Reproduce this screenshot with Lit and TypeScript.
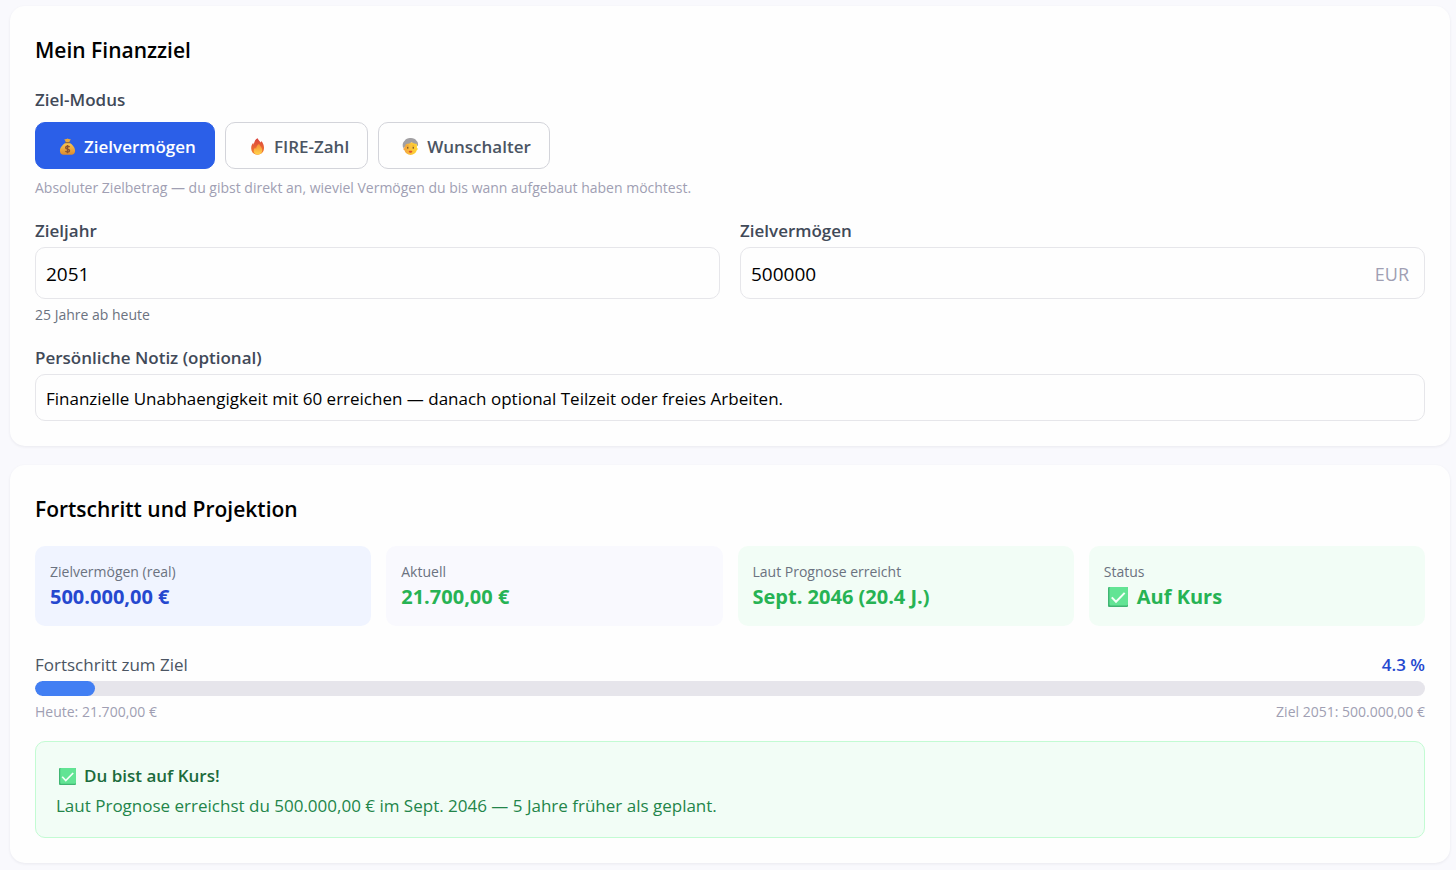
import { LitElement, html, css } from "lit";
import { customElement, state } from "lit/decorators.js";
import { classMap } from "lit/directives/class-map.js";
import { styleMap } from "lit/directives/style-map.js";

const moneyBag = html`<svg class="icon" viewBox="0 0 18 18" aria-hidden="true">
  <defs>
    <linearGradient id="bag" x1="0" y1="0" x2="0" y2="1">
      <stop offset="0" stop-color="#f9c650" />
      <stop offset="1" stop-color="#dd8b2d" />
    </linearGradient>
  </defs>
  <path d="M5.6 1.2c1 .5 1.500-.6 2.400-.1 .7-.8 1.500-.8 2.100 0 .8-.5 1.400.6 2.400.1L10.700 4.600H7.400z" fill="#e9a93c" />
  <path d="M7 5.400h4.200c3 1.500 5.800 4.800 5.800 8.100 0 2.700-1.600 4.200-3.700 4.200H4.800c-2.200 0-3.800-1.500-3.800-4.200C1 10.200 4 6.900 7 5.400z" fill="url(#bag)" />
  <rect x="6.300" y="4.200" width="5.500" height="1.400" rx=".7" fill="#8a6a4a" />
  <path d="M11.200 9.700c-.4-.7-1.200-1-2.200-1-1.200 0-2 .6-2 1.500 0 2.200 4.200 1 4.200 3.200 0 .9-.9 1.500-2.100 1.500-1.100 0-1.900-.4-2.300-1.100M9 7.400v8.800" fill="none" stroke="#8a5230" stroke-width="1.400" />
</svg>`;

const flame = html`<svg class="icon" viewBox="0 0 18 18" aria-hidden="true">
  <defs>
    <linearGradient id="outer" x1="0" y1="0" x2="0" y2="1">
      <stop offset="0" stop-color="#d9403b" />
      <stop offset="1" stop-color="#f5832f" />
    </linearGradient>
    <linearGradient id="inner" x1="0" y1="0" x2="0" y2="1">
      <stop offset="0" stop-color="#f58a35" />
      <stop offset="1" stop-color="#ffd54a" />
    </linearGradient>
  </defs>
  <path d="M9.200.3c.6 2 2.200 2.800 3.200 4.400.4-.4.600-.9.600-1.500 1.900 1.900 2.900 4.700 2.900 7.500 0 4-2.700 7-6.700 7s-6.900-2.800-6.900-6.900c0-2.700 1-4.400 2.300-5.700 0 .9.100 1.500.5 2C5.300 4.200 6.500 1.500 9.200.3z" fill="url(#outer)" />
  <path d="M10.800 6c.1 2 3.200 3.500 3.200 7 0 2.800-1.900 4.600-4.500 4.600-2.500 0-4.500-1.600-4.500-4.100 0-1.500.7-2.700 1.600-3.500.1.800.4 1.300 1 1.500C7.600 9 8.700 7.200 10.800 6z" fill="url(#inner)" />
</svg>`;

const elder = html`<svg class="icon" viewBox="0 0 18 18" aria-hidden="true">
  <defs>
    <linearGradient id="skin" x1="0" y1="0" x2="1" y2="0">
      <stop offset="0" stop-color="#f2a040" />
      <stop offset=".5" stop-color="#fbc23a" />
      <stop offset="1" stop-color="#ffd52e" />
    </linearGradient>
  </defs>
  <path d="M2.400 4.500h13.400v6.300h.9c.1 1-.3 1.900-1.100 2.200-.8 3-3.200 4.900-6.500 4.900s-5.700-1.900-6.500-4.900c-.9-.3-1.300-1.200-1.200-2.200h1z" fill="url(#skin)" />
  <path d="M1.200 10.600C.3 7.700.5 4.600 2.800 2.800 4 .9 6.200 0 8.800.1c2.900-.2 5.400.8 6.500 2.700 1.700 1.200 2 3.600 1.500 6-.8-.6-1.100-1.500-1.300-2.600-2.300-.1-4-.8-5.300-2C8.900 5.500 6.800 6.200 4.700 6.300c-.5.400-.8.700-1 1.200-.3 1.400-.9 2.600-2.500 3.100z" fill="#a2a0a3" />
  <path d="M5 8.600h1.900M11 8.600h1.900" fill="none" stroke="#c88a35" stroke-width=".7" />
  <ellipse cx="6.100" cy="10.400" rx=".8" ry=".9" fill="#704828" />
  <ellipse cx="11.900" cy="10.400" rx=".8" ry=".9" fill="#704828" />
  <path d="M7 14c1.200-.5 2.800-.5 4 0-.4 1.200-1.100 1.700-2 1.700s-1.600-.5-2-1.700z" fill="#dc5330" />
</svg>`;

const check = html`<svg class="icon check" viewBox="0 0 18 18" aria-hidden="true">
  <rect width="18" height="18" rx="1" fill="#41b573" />
  <rect x="1.300" y="0" width="16.700" height="16.600" rx="1" fill="#62e494" />
  <path d="M3.400 9.300l3.800 4L15 5.300" fill="none" stroke="#f4fff8" stroke-width="1.800" />
</svg>`;

const MODES = [
  { id: "wealth", label: "Zielvermögen", icon: moneyBag },
  { id: "fire", label: "FIRE-Zahl", icon: flame },
  { id: "age", label: "Wunschalter", icon: elder },
];

const STATS = [
  { label: "Zielvermögen (real)", value: "500.000,00 €", tone: "blue" },
  { label: "Aktuell", value: "21.700,00 €", tone: "neutral" },
  { label: "Laut Prognose erreicht", value: "Sept. 2046 (20.4 J.)", tone: "green" },
  { label: "Status", value: "Auf Kurs", tone: "green", checked: true },
];

@customElement("app-root")
export class AppRoot extends LitElement {
  @state() private mode = "wealth";
  private progress = 4.3;

  static styles = css`
    :host {
      display: block;
      box-sizing: border-box;
      min-height: 100vh;
      padding: 6px 6px 7px 10px;
      background: #f9f9fd;
      font-family: "Open Sans", "Noto Sans", sans-serif;
      font-size: 17px;
      line-height: 24px;
      color: #000;
    }
    *, *::before, *::after { box-sizing: border-box; }
    h2, h3, p, dl, dd, dt { margin: 0; }
    main { display: flex; flex-direction: column; gap: 19px; }
    .card {
      display: flex;
      flex-direction: column;
      padding: 25px;
      border-radius: 15px;
      background: #fefefe;
      box-shadow: 0 1px 3px rgba(30, 30, 50, 0.07);
    }
    h2 { font-size: 21px; line-height: 38px; font-weight: 600; margin-bottom: 18px; }
    .label { display: block; font-weight: 600; color: #414958; line-height: 26px; }
    .modes { display: flex; flex-wrap: wrap; gap: 10px; margin-top: 9px; }
    .mode {
      display: inline-flex;
      align-items: center;
      gap: 8px;
      height: 47px;
      padding: 2px 18px 0 23px;
      border: 1px solid #d3d4da;
      border-radius: 10px;
      background: #fefefe;
      color: #4b5563;
      font: inherit;
      font-weight: 600;
      cursor: pointer;
    }
    .mode.active { background: #2b5fe8; border-color: #2b5fe8; color: #fff; }
    .icon { display: block; flex: none; width: 17px; height: 17px; }
    .hint { font-size: 14px; line-height: 20px; color: #6b7280; }
    .muted { color: #a09fb3; }
    .intro { margin-top: 9px; margin-bottom: 20px; }
    .fields { display: grid; grid-template-columns: 1fr 1fr; gap: 20px; margin-bottom: 20px; }
    .box {
      display: flex;
      align-items: center;
      height: 52px;
      margin-top: 3px;
      padding: 1px 15px 0 10px;
      border: 1px solid #e6e6ea;
      border-radius: 10px;
      font-size: 19px;
    }
    .box.note { height: 47px; padding-top: 2px; font-size: 17px; }
    .box input {
      flex: 1;
      min-width: 0;
      padding: 0;
      border: 0;
      outline: 0;
      background: none;
      color: #000;
      font: inherit;
      appearance: textfield;
    }
    .unit { color: #a09fb3; font-size: 18px; }
    .fields .hint { margin-top: 6px; }
    .stats { display: grid; grid-template-columns: repeat(4, 1fr); gap: 15px; }
    .stat { padding: 15px; height: 80px; border-radius: 10px; }
    .stat dt { font-size: 14px; line-height: 22px; color: #6b7280; }
    .stat dd { display: flex; align-items: center; gap: 9px; font-size: 20px; line-height: 28px; font-weight: 700; }
    .stat .icon { width: 20px; height: 20px; margin-left: 4px; }
    .blue { background: #f0f4ff; }
    .blue dd { color: #2548cf; }
    .neutral { background: #f9f9fe; }
    .green { background: #f2fdf6; }
    .neutral dd, .green dd { color: #27b354; }
    .row { display: flex; justify-content: space-between; }
    .progress-head { margin-top: 27px; color: #4b5563; }
    .percent { color: #2548cf; font-weight: 600; }
    .track { height: 15px; margin: 4px 0 6px; border-radius: 8px; background: #e6e5eb; overflow: hidden; }
    .fill { height: 100%; border-radius: 8px; background: #427ff3; }
    .notice {
      margin-top: 19px;
      padding: 19px 20px 17px;
      border: 1px solid #c3fbd3;
      border-radius: 10px;
      background: #f2fdf6;
      color: #23854a;
    }
    .notice h3 { display: flex; align-items: center; gap: 8px; margin-left: 3px; font-size: 17px; line-height: 30px; font-weight: 600; color: #1c6b3c; }
    .notice p { line-height: 29px; }
  `;

  render() {
    return html`<main>
      <section class="card">
        <h2>Mein Finanzziel</h2>
        <span class="label" id="mode-label">Ziel-Modus</span>
        <div class="modes" role="group" aria-labelledby="mode-label">
          ${MODES.map(
            (m) => html`<button
              type="button"
              class=${classMap({ mode: true, active: m.id === this.mode })}
              aria-pressed=${m.id === this.mode ? "true" : "false"}
              @click=${() => (this.mode = m.id)}
            >${m.icon}<span>${m.label}</span></button>`
          )}
        </div>
        <p class="hint muted intro">Absoluter Zielbetrag — du gibst direkt an, wieviel Vermögen du bis wann aufgebaut haben möchtest.</p>
        <div class="fields">
          <div>
            <label class="label" for="year">Zieljahr</label>
            <div class="box"><input id="year" type="number" value="2051" /></div>
            <p class="hint">25 Jahre ab heute</p>
          </div>
          <div>
            <label class="label" for="amount">Zielvermögen</label>
            <div class="box"><input id="amount" type="number" value="500000" /><span class="unit">EUR</span></div>
          </div>
        </div>
        <label class="label" for="note">Persönliche Notiz (optional)</label>
        <div class="box note">
          <input id="note" type="text" value="Finanzielle Unabhaengigkeit mit 60 erreichen — danach optional Teilzeit oder freies Arbeiten." />
        </div>
      </section>

      <section class="card">
        <h2>Fortschritt und Projektion</h2>
        <dl class="stats">
          ${STATS.map(
            (s) => html`<div class="stat ${s.tone}">
              <dt>${s.label}</dt>
              <dd>${s.checked ? check : null}<span>${s.value}</span></dd>
            </div>`
          )}
        </dl>
        <div class="row progress-head">
          <span id="progress-label">Fortschritt zum Ziel</span>
          <span class="percent">${this.progress} %</span>
        </div>
        <div class="track" role="progressbar" aria-labelledby="progress-label" aria-valuenow=${this.progress}>
          <div class="fill" style=${styleMap({ width: `${this.progress}%` })}></div>
        </div>
        <div class="row hint muted">
          <span>Heute: 21.700,00 €</span>
          <span>Ziel 2051: 500.000,00 €</span>
        </div>
        <div class="notice">
          <h3>${check}<span>Du bist auf Kurs!</span></h3>
          <p>Laut Prognose erreichst du 500.000,00 € im Sept. 2046 — 5 Jahre früher als geplant.</p>
        </div>
      </section>
    </main>`;
  }
}
